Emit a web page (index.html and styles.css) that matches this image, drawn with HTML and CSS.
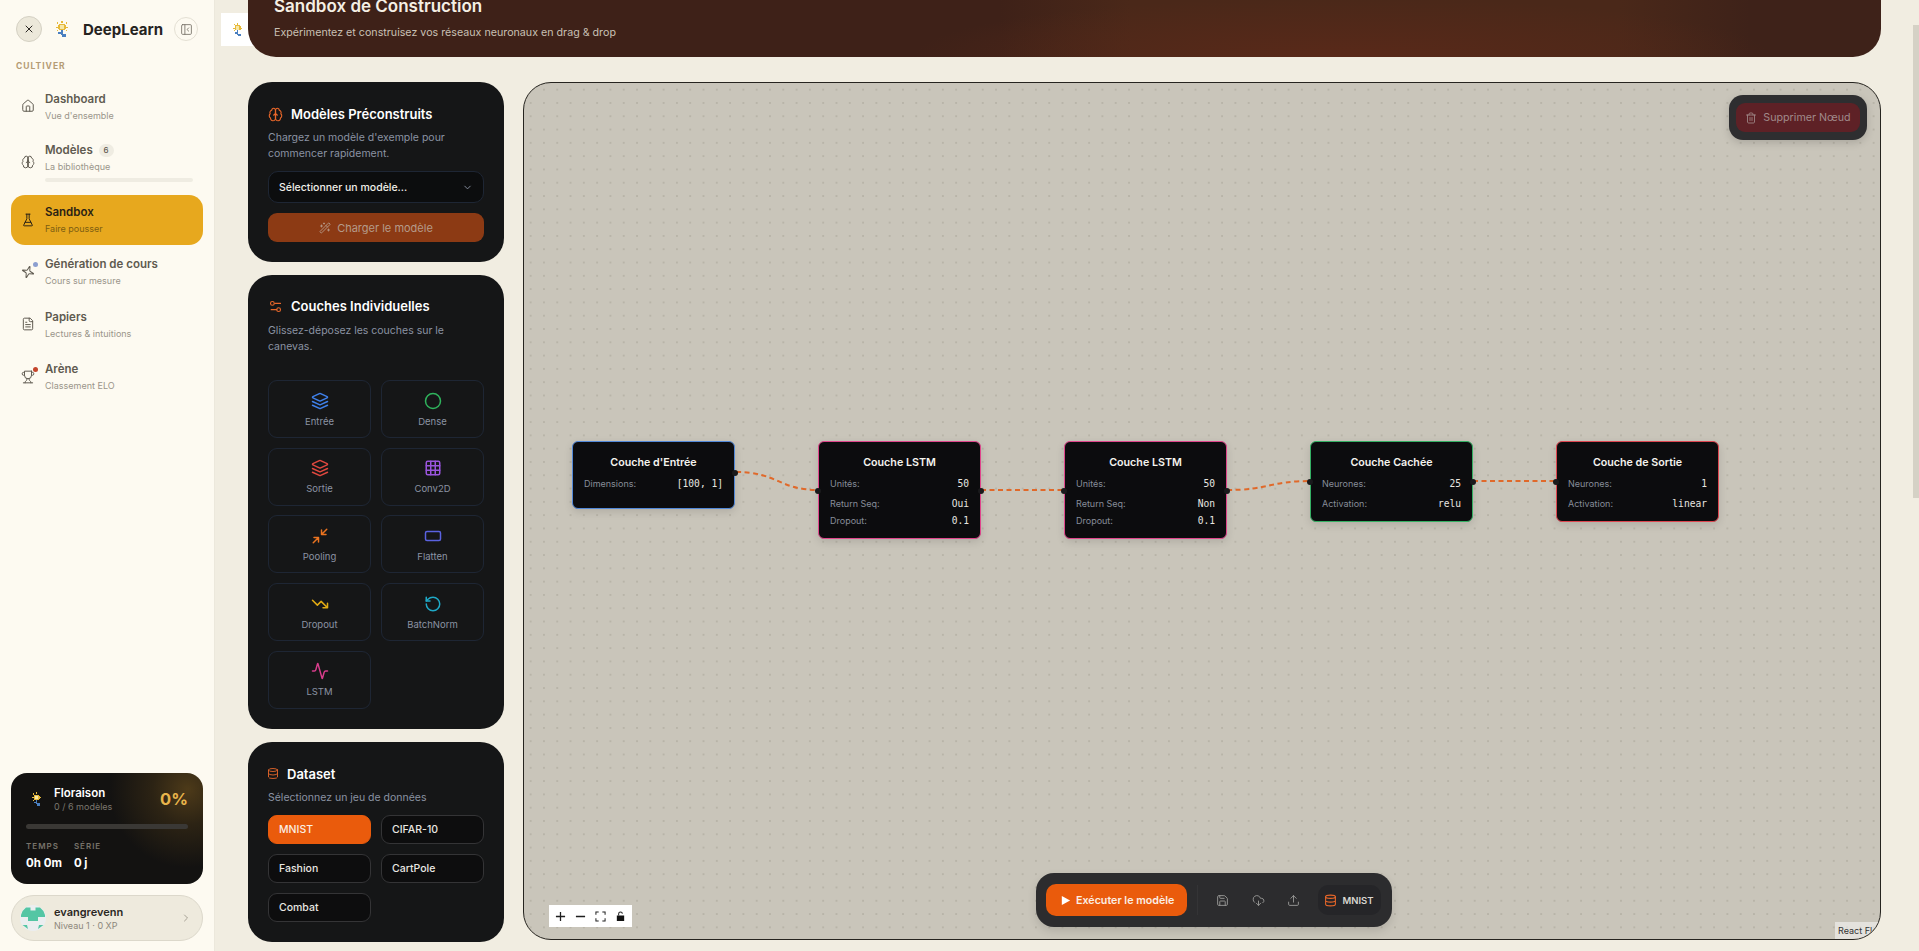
FILE: index.html
```html
<!DOCTYPE html>
<html lang="fr">
<head>
    <meta charset="UTF-8">
    <title>DeepLearn - Sandbox</title>
    <link rel="stylesheet" href="styles.css">
</head>
<body>
    <!-- icones -->
    <svg class="sprite" xmlns="http://www.w3.org/2000/svg">
        <symbol id="i-x" viewBox="0 0 24 24"><path d="M18 6 6 18M6 6l12 12"/></symbol>
        <symbol id="i-panel" viewBox="0 0 24 24"><rect x="3" y="3" width="18" height="18" rx="2"/><path d="M9 3v18M16 15l-3-3 3-3"/></symbol>
        <symbol id="i-house" viewBox="0 0 24 24"><path d="M15 21v-8a1 1 0 0 0-1-1h-4a1 1 0 0 0-1 1v8"/><path d="M3 10a2 2 0 0 1 .709-1.528l7-5.999a2 2 0 0 1 2.582 0l7 5.999A2 2 0 0 1 21 10v9a2 2 0 0 1-2 2H5a2 2 0 0 1-2-2z"/></symbol>
        <symbol id="i-brain" viewBox="0 0 24 24"><path d="M12 5a3 3 0 1 0-5.997.125 4 4 0 0 0-2.526 5.77 4 4 0 0 0 .556 6.588A4 4 0 1 0 12 18Z"/><path d="M12 5a3 3 0 1 1 5.997.125 4 4 0 0 1 2.526 5.77 4 4 0 0 1-.556 6.588A4 4 0 1 1 12 18Z"/><path d="M15 13a4.5 4.5 0 0 1-3-4 4.5 4.5 0 0 1-3 4M12 5v13"/></symbol>
        <symbol id="i-flask" viewBox="0 0 24 24"><path d="M10 2v7.527a2 2 0 0 1-.211.896L4.72 20.55a1 1 0 0 0 .9 1.45h12.76a1 1 0 0 0 .9-1.45l-5.069-10.127A2 2 0 0 1 14 9.527V2"/><path d="M8.5 2h7M7 16h10"/></symbol>
        <symbol id="i-sparkles" viewBox="0 0 24 24"><g transform="rotate(18 12 12)"><path d="M9.937 15.5A2 2 0 0 0 8.5 14.063l-6.135-1.582a.5.5 0 0 1 0-.962L8.5 9.936A2 2 0 0 0 9.937 8.5l1.582-6.135a.5.5 0 0 1 .963 0L14.063 8.5A2 2 0 0 0 15.5 9.937l6.135 1.581a.5.5 0 0 1 0 .964L15.5 14.063a2 2 0 0 0-1.437 1.437l-1.582 6.135a.5.5 0 0 1-.963 0z"/></g></symbol>
        <symbol id="i-file" viewBox="0 0 24 24"><path d="M15 2H6a2 2 0 0 0-2 2v16a2 2 0 0 0 2 2h12a2 2 0 0 0 2-2V7Z"/><path d="M14 2v4a2 2 0 0 0 2 2h4M10 9H8M16 13H8M16 17H8"/></symbol>
        <symbol id="i-trophy" viewBox="0 0 24 24"><path d="M6 9H4.5a2.5 2.5 0 0 1 0-5H6M18 9h1.5a2.5 2.5 0 0 0 0-5H18M4 22h16M10 14.66V17c0 .55-.47.98-.97 1.21C7.85 18.75 7 20.24 7 22M14 14.66V17c0 .55.47.98.97 1.21C16.15 18.75 17 20.24 17 22"/><path d="M18 2H6v7a6 6 0 0 0 12 0V2Z"/></symbol>
        <symbol id="i-wand" viewBox="0 0 24 24"><path d="m21.64 3.64-1.28-1.28a1.21 1.21 0 0 0-1.72 0L2.36 18.64a1.21 1.21 0 0 0 0 1.72l1.28 1.28a1.2 1.2 0 0 0 1.72 0L21.64 5.36a1.2 1.2 0 0 0 0-1.72"/><path d="m14 7 3 3M5 6v4M19 14v4M10 2v2M7 8H3M21 16h-4M11 3H9"/></symbol>
        <symbol id="i-sliders" viewBox="0 0 24 24"><path d="M20 7h-9M14 17H5"/><circle cx="17" cy="17" r="3"/><circle cx="7" cy="7" r="3"/></symbol>
        <symbol id="i-down" viewBox="0 0 24 24"><path d="m6 9 6 6 6-6"/></symbol>
        <symbol id="i-right" viewBox="0 0 24 24"><path d="m9 18 6-6-6-6"/></symbol>
        <symbol id="i-layers" viewBox="0 0 24 24"><path d="M12.83 2.18a2 2 0 0 0-1.66 0L2.6 6.08a1 1 0 0 0 0 1.83l8.58 3.91a2 2 0 0 0 1.66 0l8.58-3.9a1 1 0 0 0 0-1.83Z"/><path d="m22 17.65-9.17 4.16a2 2 0 0 1-1.66 0L2 17.65M22 12.65l-9.17 4.16a2 2 0 0 1-1.66 0L2 12.65"/></symbol>
        <symbol id="i-circle" viewBox="0 0 24 24"><circle cx="12" cy="12" r="10"/></symbol>
        <symbol id="i-grid" viewBox="0 0 24 24"><rect x="3" y="3" width="18" height="18" rx="2"/><path d="M3 9h18M3 15h18M9 3v18M15 3v18"/></symbol>
        <symbol id="i-min" viewBox="0 0 24 24"><path d="m14 10 7-7M20 10h-6V4M3 21l7-7M4 14h6v6"/></symbol>
        <symbol id="i-rect" viewBox="0 0 24 24"><rect x="2" y="6" width="20" height="12" rx="2"/></symbol>
        <symbol id="i-trend" viewBox="0 0 24 24"><path d="M16 17h6v-6M22 17l-8.5-8.5-5 5L2 7"/></symbol>
        <symbol id="i-rotate" viewBox="0 0 24 24"><path d="M3 12a9 9 0 1 0 9-9 9.75 9.75 0 0 0-6.74 2.74L3 8"/><path d="M3 3v5h5"/></symbol>
        <symbol id="i-activity" viewBox="0 0 24 24"><path d="M22 12h-2.48a2 2 0 0 0-1.93 1.46l-2.35 8.36a.25.25 0 0 1-.48 0L9.24 2.18a.25.25 0 0 0-.48 0l-2.35 8.36A2 2 0 0 1 4.49 12H2"/></symbol>
        <symbol id="i-db" viewBox="0 0 24 24"><ellipse cx="12" cy="5" rx="9" ry="3"/><path d="M3 5v14a9 3 0 0 0 18 0V5M3 12a9 3 0 0 0 18 0"/></symbol>
        <symbol id="i-save" viewBox="0 0 24 24"><path d="M15.2 3a2 2 0 0 1 1.4.6l3.8 3.8a2 2 0 0 1 .6 1.4V19a2 2 0 0 1-2 2H5a2 2 0 0 1-2-2V5a2 2 0 0 1 2-2z"/><path d="M17 21v-7a1 1 0 0 0-1-1H8a1 1 0 0 0-1 1v7M7 3v4a1 1 0 0 0 1 1h7"/></symbol>
        <symbol id="i-cloud" viewBox="0 0 24 24"><path d="M12 13v8M4.393 15.269A7 7 0 1 1 15.71 8h1.79a4.5 4.5 0 0 1 2.436 8.284M8 17l4 4 4-4"/></symbol>
        <symbol id="i-upload" viewBox="0 0 24 24"><path d="M21 15v4a2 2 0 0 1-2 2H5a2 2 0 0 1-2-2v-4M17 8l-5-5-5 5M12 3v12"/></symbol>
        <symbol id="i-trash" viewBox="0 0 24 24"><path d="M3 6h18M19 6v14c0 1-1 2-2 2H7c-1 0-2-1-2-2V6M8 6V4c0-1 1-2 2-2h4c1 0 2 1 2 2v2M10 11v6M14 11v6"/></symbol>
        <symbol id="i-logo" viewBox="0 0 12 17" preserveAspectRatio="none">
            <g class="px-y"><rect x="5" y="0" width="2" height="2"/><rect x="1" y="1" width="1" height="2"/><rect x="10" y="1" width="1" height="2"/><rect x="0" y="6" width="2" height="1"/><rect x="10" y="6" width="2" height="1"/><rect x="3" y="3" width="6" height="6"/><rect x="1" y="9" width="1" height="1"/><rect x="10" y="9" width="1" height="1"/><rect x="2" y="4" width="8" height="4"/></g>
            <g class="px-w"><rect x="4" y="4" width="4" height="4"/></g>
            <g class="px-b"><rect x="5" y="9" width="2" height="5"/><rect x="6" y="13" width="4" height="3"/><rect x="2" y="11" width="3" height="2"/></g>
        </symbol>
    </svg>

    <div class="app">
        <aside class="sidebar">
            <div class="brand">
                <button class="close-btn"><svg class="ico"><use href="#i-x"/></svg></button>
                <svg class="logo"><use href="#i-logo"/></svg>
                <span class="brand-name">DeepLearn</span>
                <button class="collapse-btn"><svg class="ico"><use href="#i-panel"/></svg></button>
            </div>
            <div class="nav-label">CULTIVER</div>
            <nav class="nav">
                <a class="nav-item">
                    <svg class="ico"><use href="#i-house"/></svg>
                    <div><div class="nav-title">Dashboard</div><div class="nav-sub">Vue d'ensemble</div></div>
                </a>
                <a class="nav-item nav-models">
                    <svg class="ico"><use href="#i-brain"/></svg>
                    <div class="nav-body">
                        <div class="nav-title">Modèles <span class="badge">6</span></div>
                        <div class="nav-sub">La bibliothèque</div>
                        <div class="nav-bar"></div>
                    </div>
                </a>
                <a class="nav-item active">
                    <svg class="ico"><use href="#i-flask"/></svg>
                    <div><div class="nav-title">Sandbox</div><div class="nav-sub">Faire pousser</div></div>
                </a>
                <a class="nav-item">
                    <span class="ico-wrap"><svg class="ico"><use href="#i-sparkles"/></svg><i class="dot dot-blue"></i></span>
                    <div><div class="nav-title">Génération de cours</div><div class="nav-sub">Cours sur mesure</div></div>
                </a>
                <a class="nav-item">
                    <svg class="ico"><use href="#i-file"/></svg>
                    <div><div class="nav-title">Papiers</div><div class="nav-sub">Lectures &amp; intuitions</div></div>
                </a>
                <a class="nav-item">
                    <span class="ico-wrap"><svg class="ico"><use href="#i-trophy"/></svg><i class="dot dot-red"></i></span>
                    <div><div class="nav-title">Arène</div><div class="nav-sub">Classement ELO</div></div>
                </a>
            </nav>

            <div class="stage-card">
                <div class="stage-top">
                    <svg class="logo stage-logo"><use href="#i-logo"/></svg>
                    <div class="stage-name">
                        <div class="stage-title">Floraison</div>
                        <div class="stage-sub">0 / 6 modèles</div>
                    </div>
                    <div class="stage-pct">0%</div>
                </div>
                <div class="stage-bar"></div>
                <div class="stage-stats">
                    <div><div class="stat-label">TEMPS</div><div class="stat-value">0h 0m</div></div>
                    <div><div class="stat-label">SÉRIE</div><div class="stat-value">0 j</div></div>
                </div>
            </div>

            <div class="user-pill">
                <svg class="avatar" viewBox="0 0 26 26">
                    <circle cx="13" cy="13" r="13" fill="#ebeef0"/>
                    <path d="M6 2.5h4.500v3h5v-3H20a13 13 0 0 1 5 7.500v2h-7v4h-10v-4H1v-2a13 13 0 0 1 5-7.500z" fill="#54c6a4"/>
                    <path d="M2.500 20H7l1 4zM23.500 20H19l-1 4z" fill="#54c6a4"/>
                </svg>
                <div class="user-info">
                    <div class="user-name">evangrevenn</div>
                    <div class="user-sub">Niveau 1 · 0 XP</div>
                </div>
                <svg class="ico user-chev"><use href="#i-right"/></svg>
            </div>
        </aside>

        <main class="main">
            <div class="logo-tile"><svg class="logo"><use href="#i-logo"/></svg></div>
            <header class="banner">
                <h1>Sandbox de Construction</h1>
                <p>Expérimentez et construisez vos réseaux neuronaux en drag &amp; drop</p>
            </header>

            <div class="workspace">
                <div class="side-col">
                    <section class="panel">
                        <h2><svg class="ico"><use href="#i-brain"/></svg>Modèles Préconstruits</h2>
                        <p class="panel-desc">Chargez un modèle d'exemple pour commencer rapidement.</p>
                        <div class="select">Sélectionner un modèle...<svg class="ico"><use href="#i-down"/></svg></div>
                        <button class="load-btn"><svg class="ico"><use href="#i-wand"/></svg>Charger le modèle</button>
                    </section>

                    <section class="panel panel-layers">
                        <h2><svg class="ico"><use href="#i-sliders"/></svg>Couches Individuelles</h2>
                        <p class="panel-desc">Glissez-déposez les couches sur le canevas.</p>
                        <div class="layer-grid">
                            <div class="layer c-blue"><svg class="ico"><use href="#i-layers"/></svg>Entrée</div>
                            <div class="layer c-green"><svg class="ico"><use href="#i-circle"/></svg>Dense</div>
                            <div class="layer c-red"><svg class="ico"><use href="#i-layers"/></svg>Sortie</div>
                            <div class="layer c-purple"><svg class="ico"><use href="#i-grid"/></svg>Conv2D</div>
                            <div class="layer c-orange"><svg class="ico"><use href="#i-min"/></svg>Pooling</div>
                            <div class="layer c-indigo"><svg class="ico"><use href="#i-rect"/></svg>Flatten</div>
                            <div class="layer c-yellow"><svg class="ico"><use href="#i-trend"/></svg>Dropout</div>
                            <div class="layer c-cyan"><svg class="ico"><use href="#i-rotate"/></svg>BatchNorm</div>
                            <div class="layer c-pink"><svg class="ico"><use href="#i-activity"/></svg>LSTM</div>
                        </div>
                    </section>

                    <section class="panel panel-data">
                        <h2><svg class="ico"><use href="#i-db"/></svg>Dataset</h2>
                        <p class="panel-desc">Sélectionnez un jeu de données</p>
                        <div class="data-grid">
                            <button class="data-btn on">MNIST</button>
                            <button class="data-btn">CIFAR-10</button>
                            <button class="data-btn">Fashion</button>
                            <button class="data-btn">CartPole</button>
                            <button class="data-btn">Combat</button>
                        </div>
                    </section>
                </div>

                <div class="canvas">
                    <svg class="edges" viewBox="0 0 1355 856">
                        <path d="M212 389 C254 389 254 407 295 407"/>
                        <path d="M457 407 H541"/>
                        <path d="M703 407 C745 407 745 398 787 398"/>
                        <path d="M949 398 H1033"/>
                    </svg>

                    <div class="node n-blue pos1">
                        <div class="node-title">Couche d'Entrée</div>
                        <div class="row"><span>Dimensions:</span><code>[100, 1]</code></div>
                        <i class="handle right"></i>
                    </div>
                    <div class="node n-pink pos2">
                        <div class="node-title">Couche LSTM</div>
                        <div class="row"><span>Unités:</span><code>50</code></div>
                        <div class="row"><span>Return Seq:</span><code>Oui</code></div>
                        <div class="row"><span>Dropout:</span><code>0.1</code></div>
                        <i class="handle left"></i><i class="handle right"></i>
                    </div>
                    <div class="node n-pink pos3">
                        <div class="node-title">Couche LSTM</div>
                        <div class="row"><span>Unités:</span><code>50</code></div>
                        <div class="row"><span>Return Seq:</span><code>Non</code></div>
                        <div class="row"><span>Dropout:</span><code>0.1</code></div>
                        <i class="handle left"></i><i class="handle right"></i>
                    </div>
                    <div class="node n-green pos4">
                        <div class="node-title">Couche Cachée</div>
                        <div class="row"><span>Neurones:</span><code>25</code></div>
                        <div class="row"><span>Activation:</span><code>relu</code></div>
                        <i class="handle left up"></i><i class="handle right up"></i>
                    </div>
                    <div class="node n-red pos5">
                        <div class="node-title">Couche de Sortie</div>
                        <div class="row"><span>Neurones:</span><code>1</code></div>
                        <div class="row"><span>Activation:</span><code>linear</code></div>
                        <i class="handle left up"></i>
                    </div>

                    <div class="delete-panel">
                        <button class="delete-btn"><svg class="ico"><use href="#i-trash"/></svg>Supprimer Nœud</button>
                    </div>

                    <div class="flow-controls">
                        <svg viewBox="0 0 12 12"><path d="M6 1v10M1 6h10" class="ctl"/></svg>
                        <svg viewBox="0 0 12 12"><path d="M1 6h10" class="ctl"/></svg>
                        <svg viewBox="0 0 12 12"><path d="M1 4V1h3M8 1h3v3M11 8v3H8M4 11H1V8" class="ctl thin"/></svg>
                        <svg viewBox="0 0 12 12"><path d="M2 5h8v6H2z" class="ctl-fill"/><path d="M4 5V3a2 2 0 0 1 4 0" class="ctl thin"/></svg>
                    </div>

                    <div class="toolbar">
                        <button class="run-btn"><svg viewBox="0 0 24 24"><path d="M4 2l18 10-18 10z"/></svg>Exécuter le modèle</button>
                        <span class="tool-sep"></span>
                        <svg class="ico tool"><use href="#i-save"/></svg>
                        <svg class="ico tool"><use href="#i-cloud"/></svg>
                        <svg class="ico tool"><use href="#i-upload"/></svg>
                        <span class="tool-data"><svg class="ico"><use href="#i-db"/></svg>MNIST</span>
                    </div>

                    <div class="attribution">React Flow</div>
                </div>
            </div>
            <div class="scroll-thumb"></div>
        </main>
    </div>
</body>
</html>
```

FILE: styles.css
```css
* {
    box-sizing: border-box;
}

body {
    margin: 0;
    font-family: Inter, "Noto Sans", sans-serif;
    background-color: #f1ede1;
    color: #2a2723;
    overflow: hidden;
}

button {
    font-family: inherit;
    border: none;
}

.sprite {
    display: none;
}

.ico {
    fill: none;
    stroke: currentColor;
    stroke-width: 2;
    stroke-linecap: round;
    stroke-linejoin: round;
    flex: none;
}

.logo {
    width: 12px;
    height: 17px;
    flex: none;
    shape-rendering: crispEdges;
}

.px-y { fill: #e6b93a; }
.px-w { fill: #f6e7a8; }
.px-b { fill: #4a7fc0; }

.app {
    display: flex;
    height: 951px;
}

/* sidebar */
.sidebar {
    width: 215px;
    flex: none;
    background-color: #fdfaf1;
    border-right: 1px solid #ece8dc;
    padding: 16px 11px 10px;
    display: flex;
    flex-direction: column;
}

.brand {
    display: flex;
    align-items: center;
    height: 26px;
    padding-left: 5px;
}

.close-btn {
    width: 26px;
    height: 26px;
    border-radius: 50%;
    background-color: #ece8da;
    border: 1px solid #d4d0c3;
    padding: 0;
    display: flex;
    align-items: center;
    justify-content: center;
    color: #2a2723;
}

.close-btn .ico {
    width: 12px;
    height: 12px;
}

.brand .logo {
    margin-left: 14px;
}

.brand-name {
    margin-left: 15px;
    font-size: 15px;
    font-weight: 700;
    color: #26231f;
}

.collapse-btn {
    width: 24px;
    height: 24px;
    margin-left: auto;
    margin-right: 5px;
    border-radius: 50%;
    background: transparent;
    border: 1px solid #e4e0d4;
    padding: 0;
    display: flex;
    align-items: center;
    justify-content: center;
    color: #77736a;
}

.collapse-btn .ico {
    width: 13px;
    height: 13px;
    stroke-width: 1.6;
}

.nav-label {
    margin: 18px 0 0 5px;
    font-size: 8.5px;
    font-weight: 700;
    letter-spacing: 1px;
    color: #b59c75;
    line-height: 12px;
}

.nav {
    display: flex;
    flex-direction: column;
    margin-top: 8px;
}

.nav-item {
    display: flex;
    align-items: center;
    gap: 10px;
    height: 52.5px;
    padding-left: 10px;
    border-radius: 14px;
    color: #5f5a50;
}

.nav-item > .ico,
.ico-wrap .ico {
    width: 14px;
    height: 14px;
    stroke-width: 1.7;
}

.nav-item > div {
    min-width: 0;
}

.ico-wrap {
    position: relative;
    width: 14px;
    height: 14px;
    flex: none;
    display: block;
}

.ico-wrap .ico {
    display: block;
}

.dot {
    position: absolute;
    right: -3px;
    top: -3px;
    width: 5px;
    height: 5px;
    border-radius: 50%;
}

.dot-blue { background-color: #8c9fd0; }
.dot-red { background-color: #c4452c; }

.nav-title {
    font-size: 11.5px;
    font-weight: 600;
    line-height: 16px;
}

.nav-sub {
    font-size: 9px;
    line-height: 13px;
    margin-top: 2px;
    color: #9a958a;
}

.nav-item.active {
    background-color: #e7a81e;
    color: #2a2215;
    height: 50px;
    margin-top: 4px;
    margin-bottom: 1px;
}

.nav-item.active .nav-sub {
    color: #7d5e12;
}

.nav-models {
    height: 58px;
}

.nav-body {
    flex: 1;
    padding-right: 10px;
}

.badge {
    display: inline-block;
    width: 15px;
    height: 13px;
    margin-left: 3px;
    border-radius: 7px;
    background-color: #efece2;
    font-size: 8px;
    font-weight: 500;
    line-height: 13px;
    text-align: center;
    vertical-align: 1px;
}

.nav-bar {
    height: 4px;
    margin-top: 5px;
    border-radius: 2px;
    background-color: #efece2;
}

.stage-card {
    margin-top: auto;
    height: 111px;
    border-radius: 16px;
    padding: 13px 15px;
    background: radial-gradient(circle 78px at 92% 15%, #4d3a19 0, #2c2314 45%, #131211 100%), #131211;
    color: #fff;
}

.stage-top {
    display: flex;
    align-items: center;
    height: 26px;
}

.stage-logo {
    width: 9px;
    height: 15px;
    margin-left: 6px;
    margin-right: 13px;
}

.stage-name {
    flex: 1;
}

.stage-title {
    font-size: 11.5px;
    font-weight: 600;
    line-height: 14px;
}

.stage-sub {
    font-size: 9px;
    line-height: 13px;
    color: #7b776e;
}

.stage-pct {
    font-size: 16.5px;
    font-weight: 700;
    color: #e8b44b;
}

.stage-bar {
    height: 5px;
    margin-top: 12px;
    border-radius: 3px;
    background-color: #3a3835;
}

.stage-stats {
    display: flex;
    gap: 12px;
    margin-top: 12px;
}

.stat-label {
    font-size: 8px;
    font-weight: 600;
    letter-spacing: 1px;
    color: #77736a;
    line-height: 11px;
}

.stat-value {
    font-size: 11.5px;
    font-weight: 700;
    line-height: 14px;
    margin-top: 4px;
}

.user-pill {
    margin-top: 11px;
    height: 46px;
    border-radius: 23px;
    background-color: #eeeadd;
    border: 1px solid #dcd8cb;
    display: flex;
    align-items: center;
    padding: 0 10px 0 8px;
}

.avatar {
    width: 26px;
    height: 26px;
    flex: none;
    margin-right: 8px;
}

.user-info {
    flex: 1;
}

.user-name {
    font-size: 11px;
    font-weight: 600;
    line-height: 14px;
}

.user-sub {
    font-size: 9px;
    line-height: 13px;
    color: #8d887c;
}

.user-chev {
    width: 12px;
    height: 12px;
    color: #8d887c;
    stroke-width: 1.5;
}

/* contenu */
.main {
    position: relative;
    flex: 1;
    min-width: 0;
    padding: 0 38px 0 33px;
}

.logo-tile {
    position: absolute;
    left: 6px;
    top: 13px;
    width: 40px;
    height: 33px;
    background-color: #fff;
    display: flex;
    align-items: center;
    padding-left: 12px;
}

.logo-tile .logo {
    width: 9px;
    height: 14px;
}

.banner {
    position: relative;
    height: 57px;
    padding: 0 26px;
    border-radius: 0 0 28px 28px;
    background:
        radial-gradient(ellipse 430px 60px at 67% 100%, #592919, transparent),
        linear-gradient(90deg, #3e2118 46%, #4a2819 54%, #4a2819 84%, #3e2219 92%);
    overflow: hidden;
    color: #f5efe4;
}

.banner h1 {
    margin: -7px 0 0;
    font-size: 17px;
    font-weight: 600;
    line-height: 26px;
}

.banner p {
    margin: 6px 0 0;
    font-size: 10.7px;
    line-height: 16px;
    color: #c9c0b4;
}

.workspace {
    display: flex;
    gap: 19px;
    margin-top: 25px;
}

.side-col {
    width: 256px;
    flex: none;
    display: flex;
    flex-direction: column;
    gap: 13px;
}

.panel {
    background-color: #151617;
    border-radius: 24px;
    padding: 20px;
    color: #fff;
}

.panel h2 {
    display: flex;
    align-items: center;
    gap: 8px;
    margin: 0;
    font-size: 13px;
    font-weight: 600;
    line-height: 24px;
}

.panel h2 .ico {
    width: 15px;
    height: 15px;
    color: #e8672a;
    stroke-width: 1.8;
}

.panel-desc {
    margin: 4px 0 0;
    font-size: 10.5px;
    line-height: 16px;
    color: #8b93a3;
}

.select {
    display: flex;
    align-items: center;
    justify-content: space-between;
    height: 32px;
    margin-top: 9px;
    padding: 0 10px;
    border-radius: 10px;
    background-color: #0c0d0e;
    border: 1px solid #1e2634;
    font-size: 10.5px;
    font-weight: 500;
    color: #f1efe9;
}

.select .ico {
    width: 11px;
    height: 11px;
    color: #8b93a3;
}

.load-btn {
    width: 100%;
    height: 29px;
    margin-top: 10px;
    border-radius: 9px;
    background-color: #8c3a14;
    color: #b59a8a;
    font-size: 11px;
    display: flex;
    align-items: center;
    justify-content: center;
    gap: 6px;
}

.load-btn .ico {
    width: 12px;
    height: 12px;
    stroke-width: 1.8;
}

.panel-layers {
    padding-bottom: 20px;
}

.panel-layers h2 {
    margin-top: -1px;
}

.panel-layers .panel-desc {
    margin-top: 5px;
}

.layer-grid {
    display: grid;
    grid-template-columns: 103px 103px;
    grid-auto-rows: 58px;
    gap: 9.700px 10px;
    margin-top: 25px;
}

.layer {
    border: 1px solid #1e2634;
    border-radius: 9px;
    display: flex;
    flex-direction: column;
    align-items: center;
    justify-content: center;
    gap: 6px;
    font-size: 9.5px;
    color: #8b93a3;
}

.layer .ico {
    width: 18px;
    height: 18px;
}

.c-blue .ico { color: #3f80ea; }
.c-green .ico { color: #2fb35c; }
.c-red .ico { color: #e0483f; }
.c-purple .ico { color: #9a55dd; }
.c-orange .ico { color: #ea7320; }
.c-indigo .ico { color: #5a62e0; }
.c-yellow .ico { color: #e2ab14; }
.c-cyan .ico { color: #1fa9c7; }
.c-pink .ico { color: #d93d8c; }

.panel-data {
    padding-bottom: 20px;
}

.panel-data h2 {
    gap: 8px;
}

.panel-data h2 .ico {
    width: 12px;
    height: 13px;
    margin-left: -1px;
}

.data-grid {
    display: grid;
    grid-template-columns: 103px 103px;
    gap: 10px;
    margin-top: 9px;
}

.data-btn {
    height: 29px;
    padding: 0 10px;
    border-radius: 9px;
    background-color: #0d0d0e;
    border: 1px solid #343436;
    color: #e9e7e2;
    font-size: 10.5px;
    font-weight: 500;
    text-align: left;
}

.data-btn.on {
    background-color: #ea5b0c;
    border-color: #ea5b0c;
    color: #fbeee4;
}

/* canevas */
.canvas {
    position: relative;
    flex: 1;
    height: 858px;
    overflow: hidden;
    border: 1px solid #26241f;
    border-radius: 28px;
    background-color: #c9c5ba;
    background-image: radial-gradient(circle, #b8b4a8 0.7px, transparent 0.8px);
    background-size: 13.3px 13.3px;
}

.edges {
    position: absolute;
    left: 0;
    top: 0;
    width: 1355px;
    height: 856px;
}

.edges path {
    fill: none;
    stroke: #e0692a;
    stroke-width: 2;
    stroke-dasharray: 5 3.5;
}

.node {
    position: absolute;
    width: 163px;
    padding: 13px 11px 11px;
    border: 1.5px solid;
    border-radius: 6px;
    background-color: #0c0c0e;
    box-shadow: 0 3px 8px rgba(0, 0, 0, 0.12);
}

.pos1 { left: 48px; top: 358px; }
.pos2 { left: 294px; top: 358px; }
.pos3 { left: 540px; top: 358px; }
.pos4 { left: 786px; top: 358px; }
.pos5 { left: 1032px; top: 358px; }

.n-blue { border-color: #5288d8; }
.n-pink { border-color: #e0468c; }
.n-green { border-color: #34b063; }
.n-red { border-color: #de4650; }

.node-title {
    font-size: 10.7px;
    font-weight: 600;
    line-height: 14px;
    text-align: center;
    color: #f5f3ee;
    margin-top: 1px;
    margin-bottom: 7px;
}

.row {
    display: flex;
    justify-content: space-between;
    align-items: center;
    height: 13px;
    margin-top: 4px;
    font-size: 9px;
    color: #878d99;
}

.node-title + .row {
    margin-top: 0;
    margin-bottom: 7px;
}

.row code {
    font-family: "DejaVu Sans Mono", monospace;
    font-size: 9.6px;
    color: #e8e6e0;
}

.handle {
    position: absolute;
    width: 6px;
    height: 6px;
    top: 46px;
    border-radius: 50%;
    background-color: #1a1a1c;
}

.handle.up { top: 37px; }
.handle.left { left: -4px; }
.handle.right { right: -4px; }
.n-blue .handle { top: 28px; }

.delete-panel {
    position: absolute;
    right: 13px;
    top: 12px;
    padding: 8px 7px;
    border-radius: 14px;
    background-color: #2e2e30;
    box-shadow: 0 3px 8px rgba(0, 0, 0, 0.15);
}

.delete-btn {
    display: flex;
    align-items: center;
    gap: 6px;
    height: 29px;
    width: 124px;
    justify-content: center;
    border-radius: 9px;
    background-color: #5e2126;
    color: #a08a8a;
    font-size: 10.7px;
}

.delete-btn .ico {
    width: 12px;
    height: 12px;
    stroke-width: 1.7;
}

.flow-controls {
    position: absolute;
    left: 25px;
    bottom: 12px;
    height: 22px;
    width: 83px;
    display: flex;
    align-items: center;
    justify-content: space-around;
    padding: 0 2px;
    background-color: #fff;
}

.flow-controls svg {
    width: 11px;
    height: 11px;
}

.ctl {
    fill: none;
    stroke: #1f1f1f;
    stroke-width: 1.4;
}

.ctl.thin {
    stroke-width: 1.1;
}

.ctl-fill {
    fill: #111;
}

.toolbar {
    position: absolute;
    left: 512px;
    top: 790px;
    width: 356px;
    height: 54px;
    display: flex;
    align-items: center;
    padding: 0 11px 0 10px;
    border-radius: 18px;
    background-color: #2c2c2e;
    box-shadow: 0 4px 10px rgba(0, 0, 0, 0.12);
}

.run-btn {
    display: flex;
    align-items: center;
    gap: 5px;
    flex: none;
    width: 141px;
    height: 32px;
    padding-left: 14px;
    border-radius: 10px;
    background-color: #ea5b0c;
    color: #fbeee4;
    font-size: 10.7px;
    font-weight: 600;
    white-space: nowrap;
}

.run-btn svg {
    width: 11px;
    height: 11px;
    fill: #fff;
}

.tool-sep {
    width: 1px;
    height: 30px;
    flex: none;
    margin: 0 18px 0 10px;
    background-color: #343436;
}

.tool {
    width: 13px;
    height: 13px;
    color: #9a9a98;
    stroke-width: 1.7;
    margin-right: 22.5px;
}

.tool-data {
    display: flex;
    align-items: center;
    gap: 5px;
    flex: none;
    margin-left: -5px;
    height: 30px;
    width: 63px;
    justify-content: center;
    border-radius: 10px;
    background-color: #252528;
    color: #d8d6d0;
    font-size: 9.5px;
    font-weight: 600;
}

.tool-data .ico {
    width: 13px;
    height: 13px;
    color: #e8672a;
}

.attribution {
    position: absolute;
    right: 0;
    bottom: 0;
    width: 45px;
    height: 17px;
    padding: 3px 0 0 3px;
    overflow: hidden;
    white-space: nowrap;
    font-size: 9px;
    color: #333;
    background-color: rgba(255, 255, 255, 0.5);
}

.scroll-thumb {
    position: absolute;
    right: 0;
    top: 25px;
    width: 6px;
    height: 473px;
    background-color: #d5d1c5;
}
```
